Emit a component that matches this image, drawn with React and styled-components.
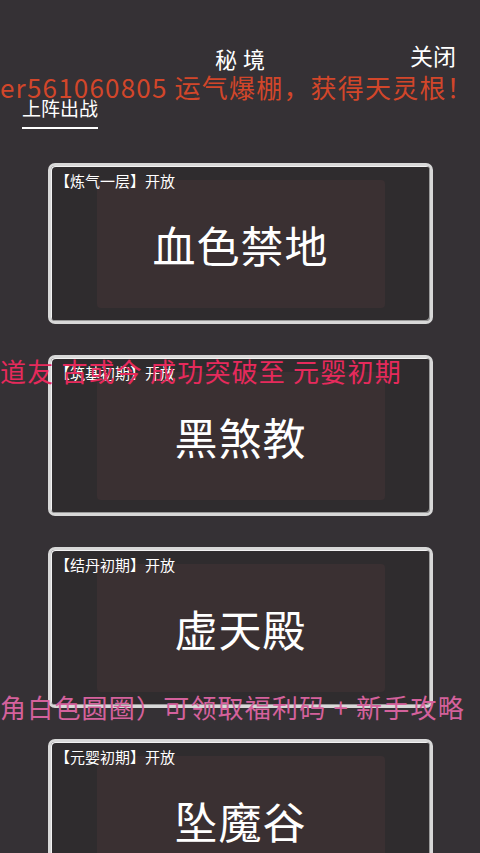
import React from 'react';
import styled, { createGlobalStyle } from 'styled-components';

const GlobalStyle = createGlobalStyle`
  html, body {
    margin: 0;
    padding: 0;
    background: #353135;
  }
  body {
    font-family: "Noto Sans CJK SC", "Noto Sans", sans-serif;
  }
`;

const colors = {
  pageBg: '#353135',
  cardBg: '#2f2c2e',
  panelBg: '#3a3032',
  border: '#d8d8d8',
  text: '#ffffff',
  notice: '#d2462a',
  rankUp: '#e62a5c',
  tip: '#d4619c',
};

const Screen = styled.div`
  position: relative;
  width: 480px;
  height: 853px;
  overflow: hidden;
  background: ${colors.pageBg};
  color: ${colors.text};
`;

const TopBar = styled.div`
  display: grid;
  grid-template-columns: 1fr auto 1fr;
  align-items: center;
  padding: 42px 24px 0 24px;
  height: 30px;

  .title {
    grid-column: 2;
    font-size: 22px;
    letter-spacing: 6px;
    margin-left: 6px;
  }

  .close {
    grid-column: 3;
    justify-self: end;
    font-size: 23px;
    margin-top: -7px;
  }
`;

const Tabs = styled.div`
  display: flex;
  padding: 25px 0 0 22px;
`;

const Tab = styled.div`
  font-size: 19px;
  line-height: 22px;
  padding-bottom: 8px;
  border-bottom: 2px solid ${props => (props.active ? colors.text : 'transparent')};
`;

const List = styled.div`
  display: flex;
  flex-direction: column;
  gap: 31px;
  padding: 34px 0 0 48px;
`;

const Card = styled.div`
  position: relative;
  box-sizing: border-box;
  width: 385px;
  height: 161px;
  border: 3px solid ${colors.border};
  border-radius: 7px;
  background: ${colors.cardBg};
  box-shadow: inset -1px -1px 0 #9a9a9a, inset 1px 1px 0 #f2f2f2;
  display: flex;
  align-items: center;
  justify-content: center;

  .label {
    position: absolute;
    top: 6px;
    left: 4px;
    font-size: 15px;
    line-height: 18px;
    z-index: 1;
  }
`;

const Panel = styled.div`
  width: 288px;
  height: 128px;
  border-radius: 4px;
  background: ${colors.panelBg};
  display: flex;
  align-items: center;
  justify-content: center;
  font-size: 43px;
  font-weight: 400;
  letter-spacing: 1px;
`;

const Marquee = styled.div`
  position: absolute;
  left: 0;
  top: ${props => props.top}px;
  white-space: nowrap;
  font-size: 26px;
  line-height: 30px;
  letter-spacing: 1.2px;
  color: ${props => props.color};
  z-index: 2;
`;

const realms = [
  { rank: '炼气一层', name: '血色禁地' },
  { rank: '筑基初期', name: '黑煞教' },
  { rank: '结丹初期', name: '虚天殿' },
  { rank: '元婴初期', name: '坠魔谷' },
];

export default () => (
  <Screen>
    <GlobalStyle />

    <TopBar>
      <div className="title">秘境</div>
      <div className="close">关闭</div>
    </TopBar>

    <Tabs>
      <Tab active>上阵出战</Tab>
    </Tabs>

    <List>
      {realms.map(r => (
        <Card key={r.name}>
          <div className="label">【{r.rank}】开放</div>
          <Panel>{r.name}</Panel>
        </Card>
      ))}
    </List>

    <Marquee top={72} color={colors.notice}>er561060805 运气爆棚，获得天灵根！</Marquee>
    <Marquee top={356} color={colors.rankUp}>道友 古或今 成功突破至 元婴初期</Marquee>
    <Marquee top={692} color={colors.tip}>角白色圆圈）可领取福利码 + 新手攻略</Marquee>
  </Screen>
);
